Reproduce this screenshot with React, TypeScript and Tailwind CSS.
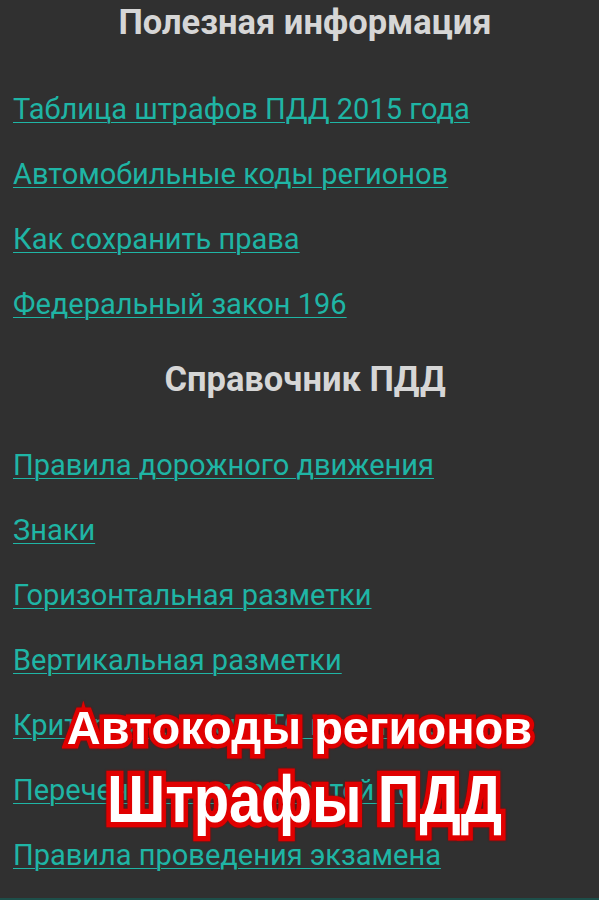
import React from "react";

const usefulLinks = [
  "Таблица штрафов ПДД 2015 года",
  "Автомобильные коды регионов",
  "Как сохранить права",
  "Федеральный закон 196",
];

const rulesLinks = [
  "Правила дорожного движения",
  "Знаки",
  "Горизонтальная разметки",
  "Вертикальная разметки",
  "Критерии допуска ТС к эксплуатации",
  "Перечень неисправностей ТС",
  "Правила проведения экзамена",
];

function LinkRow({ label }: { label: string }) {
  return (
    <div className="flex h-[65px] items-center px-[13px]">
      <a
        href="#"
        className="whitespace-nowrap text-[29px] leading-none text-[#1fb5a5] underline decoration-[#1fb5a5] decoration-1 underline-offset-[3px]"
      >
        {label}
      </a>
    </div>
  );
}

export default function App() {
  return (
    <div className="relative h-[900px] w-[599px] overflow-hidden bg-[#303030] font-['Roboto','Noto_Sans',sans-serif]">
      <div className="flex h-[44px] items-center justify-center pl-[11px] pt-[2px] text-[34.5px] font-bold text-[#d6d6d6]">
        Полезная информация
      </div>
      <div className="mt-[33px]">
        {usefulLinks.map((l) => (
          <LinkRow key={l} label={l} />
        ))}
      </div>
      <div className="flex h-[96px] items-center justify-center pb-[11px] pl-[11px] text-[34.5px] font-bold text-[#d6d6d6]">
        Справочник ПДД
      </div>
      <div>
        {rulesLinks.map((l) => (
          <LinkRow key={l} label={l} />
        ))}
      </div>
      <div className="absolute bottom-0 left-0 h-[2px] w-full bg-[#1d4f4a]" />

      {/* promo overlay */}
      <div className="absolute left-0 right-0 top-[698px] flex flex-col items-center font-['Liberation_Sans',Arial,sans-serif] font-bold text-white [paint-order:stroke_fill] [-webkit-text-stroke:9px_#e00000] [filter:drop-shadow(0_0_1px_#8a0000)]">
        <div className="text-[47px] leading-[60px]">Автокоды регионов</div>
        <div className="ml-[10px] mt-[8px] scale-y-[1.16] text-[58px] leading-[66px]">Штрафы ПДД</div>
      </div>
    </div>
  );
}
